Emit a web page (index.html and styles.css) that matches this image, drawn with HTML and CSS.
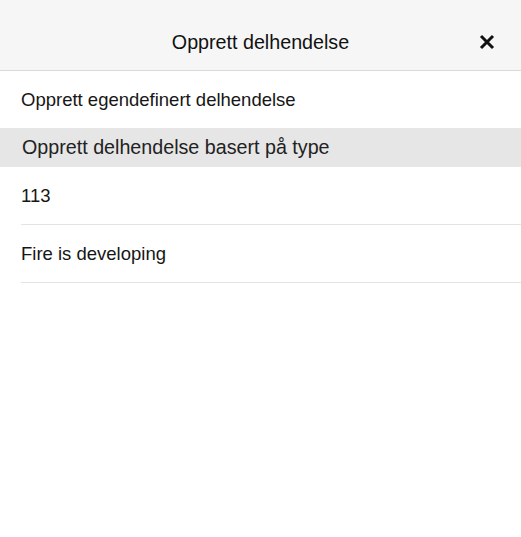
FILE: index.html
```html
<!DOCTYPE html>
<html>
<head>
<meta charset="utf-8">
<link rel="stylesheet" href="styles.css">
</head>
<body>
<div class="sheet">
  <header class="header">
    <div class="title">Opprett delhendelse</div>
    <button class="close" aria-label="Lukk">
      <svg width="16" height="16" viewBox="0 0 16 16"><path d="M2 2 L14 14 M14 2 L2 14" stroke="#111" stroke-width="3" stroke-linecap="butt"/></svg>
    </button>
  </header>
  <ul class="list">
    <li class="item item-first">Opprett egendefinert delhendelse</li>
    <li class="section">Opprett delhendelse basert på type</li>
    <li class="item">113</li>
    <li class="item">Fire is developing</li>
  </ul>
</div>
</body>
</html>
```
FILE: styles.css
```css
html, body {
  margin: 0;
  padding: 0;
  background: #fff;
}
body {
  font-family: "Liberation Sans", Arial, Helvetica, sans-serif;
  color: #161616;
  font-size: 18.5px;
}
.sheet {
  width: 521px;
}
.header {
  height: 70px;
  background: #f6f6f6;
  border-bottom: 1px solid #dadada;
  display: flex;
  align-items: center;
  justify-content: center;
  position: relative;
}
.title {
  font-size: 19.7px;
  padding-top: 14px;
  color: #111;
}
.close {
  position: absolute;
  right: 26px;
  top: 34px;
  width: 16px;
  height: 16px;
  padding: 0;
  border: 0;
  background: none;
  display: flex;
}
.list {
  list-style: none;
  margin: 0;
  padding: 0;
}
.item {
  margin-left: 21px;
  height: 57px;
  display: flex;
  align-items: center;
  border-bottom: 1px solid #e4e4e4;
}
.item-first {
  height: 57px;
  border-bottom: 0;
}
.section {
  height: 39px;
  background: #e6e6e6;
  display: flex;
  align-items: center;
  padding-left: 22px;
  color: #222;
  font-size: 19.7px;
}
```
